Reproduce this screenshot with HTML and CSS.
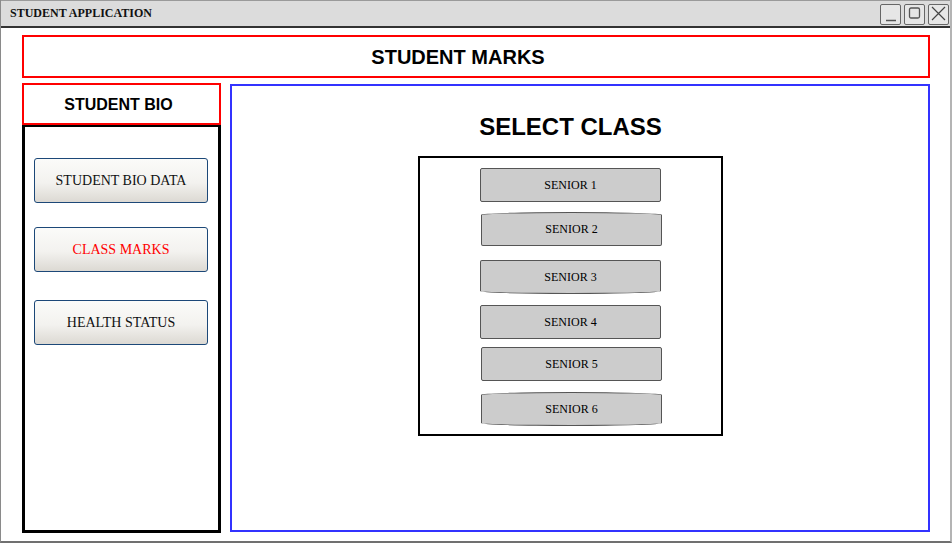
FILE: index.html
```html
<!DOCTYPE html>
<html>
<head>
<meta charset="utf-8">
<title>Student Application</title>
<link rel="stylesheet" href="styles.css">
</head>
<body>
<div class="window">
  <div class="titlebar">
    <span class="title">STUDENT APPLICATION</span>
    <div class="controls">
      <span class="ctl"><svg width="21" height="21" viewBox="0 0 21 21"><line x1="6" y1="17.5" x2="16" y2="17.5" stroke="#555" stroke-width="1.5"/></svg></span>
      <span class="ctl"><svg width="21" height="21" viewBox="0 0 21 21"><rect x="5.5" y="5" width="10" height="10" rx="1.5" fill="none" stroke="#555" stroke-width="1.3"/></svg></span>
      <span class="ctl"><svg width="21" height="21" viewBox="0 0 21 21"><path d="M4 4 L17 17 M17 4 L4 17" stroke="#444" stroke-width="1.2"/></svg></span>
    </div>
  </div>
  <div class="content">
    <div class="header">STUDENT MARKS</div>
    <div class="main">
      <div class="sidebar">
        <div class="bio-head">STUDENT BIO</div>
        <div class="bio-body">
          <div class="navbtn">STUDENT BIO DATA</div>
          <div class="navbtn active">CLASS MARKS</div>
          <div class="navbtn">HEALTH STATUS</div>
        </div>
      </div>
      <div class="panel">
        <div class="select-wrap">
          <div class="select-title">SELECT CLASS</div>
          <div class="class-box">
            <div class="cls">SENIOR 1</div>
            <div class="cls shift curve-top">SENIOR 2</div>
            <div class="cls curve-bottom">SENIOR 3</div>
            <div class="cls">SENIOR 4</div>
            <div class="cls shift">SENIOR 5</div>
            <div class="cls shift curve-top curve-bottom">SENIOR 6</div>
          </div>
        </div>
      </div>
    </div>
  </div>
</div>
</body>
</html>
```

FILE: styles.css
```css
* { box-sizing: border-box; }
html, body { margin: 0; padding: 0; background: #fff; }
body { width: 952px; height: 543px; overflow: hidden; }

.window {
  width: 952px;
  height: 543px;
  border-left: 1px solid #8a8a8a;
  border-right: 2px solid #b4b4b4;
  border-bottom: 2px solid #707070;
  display: flex;
  flex-direction: column;
}

.titlebar {
  height: 28px;
  background: #dcdcdc;
  border-top: 1px solid #9a9a9a;
  border-bottom: 2px solid #333;
  display: flex;
  align-items: center;
  justify-content: space-between;
  padding-left: 9px;
  padding-right: 1px;
  flex-shrink: 0;
}
.title {
  font-family: "Liberation Serif", serif;
  font-weight: bold;
  font-size: 12px;
  color: #111;
}
.controls { display: flex; gap: 3px; margin-top: 1px; }
.ctl {
  width: 21px;
  height: 21px;
  border: 1.5px solid #666;
  border-radius: 2px;
  background: #e6e6e6;
  display: flex;
}
.ctl svg { margin: -1.5px; }

.content {
  padding: 7px 20px 0 21px;
  flex: 1;
  display: flex;
  flex-direction: column;
}

.header {
  height: 43px;
  border: 2px solid #ff0000;
  padding: 2px 36px 0 0;
  display: flex;
  align-items: center;
  justify-content: center;
  font-family: "Liberation Sans", Arial, sans-serif;
  font-weight: bold;
  font-size: 20px;
  color: #000;
}

.main {
  margin-top: 5px;
  height: 450px;
  display: flex;
  gap: 9px;
}

.sidebar {
  width: 199px;
  display: flex;
  flex-direction: column;
}
.bio-head {
  height: 42px;
  border: 2px solid #ff0000;
  padding: 2px 6px 0 0;
  display: flex;
  align-items: center;
  justify-content: center;
  font-family: "Liberation Sans", Arial, sans-serif;
  font-weight: bold;
  font-size: 16px;
  color: #000;
}
.bio-body {
  flex: 1;
  border: 3px solid #000;
  border-top-width: 2px;
  padding: 31px 0 0 9px;
  display: flex;
  flex-direction: column;
}
.navbtn {
  width: 174px;
  height: 45px;
  border: 1px solid #1c4878;
  border-radius: 3px;
  background: linear-gradient(#fbfbf9 0%, #f3f2ef 55%, #dcd9d3 100%);
  display: flex;
  align-items: center;
  justify-content: center;
  font-family: "Liberation Serif", serif;
  font-size: 14px;
  color: #111;
}
.navbtn:nth-child(2) { margin-top: 24px; }
.navbtn:nth-child(3) { margin-top: 28px; }
.navbtn.active { color: #ff0000; }

.panel {
  width: 700px;
  height: 448px;
  margin-top: 1px;
  border: 2px solid #3333ff;
}
.select-wrap {
  margin-left: 186px;
  width: 305px;
  padding-top: 27px;
}
.select-title {
  text-align: center;
  font-family: "Liberation Sans", Arial, sans-serif;
  font-weight: bold;
  font-size: 24px;
  line-height: 28px;
  color: #000;
  margin-bottom: 15px;
}
.class-box {
  height: 280px;
  border: 2px solid #000;
  padding: 10px 0 0 60px;
  display: flex;
  flex-direction: column;
}
.cls {
  width: 181px;
  height: 34px;
  background: #cccccc;
  border: 1px solid #555;
  border-radius: 2px;
  display: flex;
  align-items: center;
  justify-content: center;
  font-family: "Liberation Serif", serif;
  font-size: 12px;
  color: #000;
}
.cls:nth-child(2) { margin-top: 10px; }
.cls:nth-child(3) { margin-top: 14px; }
.cls:nth-child(4) { margin-top: 11px; }
.cls:nth-child(5) { margin-top: 8px; }
.cls:nth-child(6) { margin-top: 11px; }
.cls.shift { margin-left: 1px; }
.cls.curve-top {
  border-top-left-radius: 90px 3px;
  border-top-right-radius: 90px 3px;
}
.cls.curve-bottom {
  border-bottom-left-radius: 90px 3px;
  border-bottom-right-radius: 90px 3px;
}
```
